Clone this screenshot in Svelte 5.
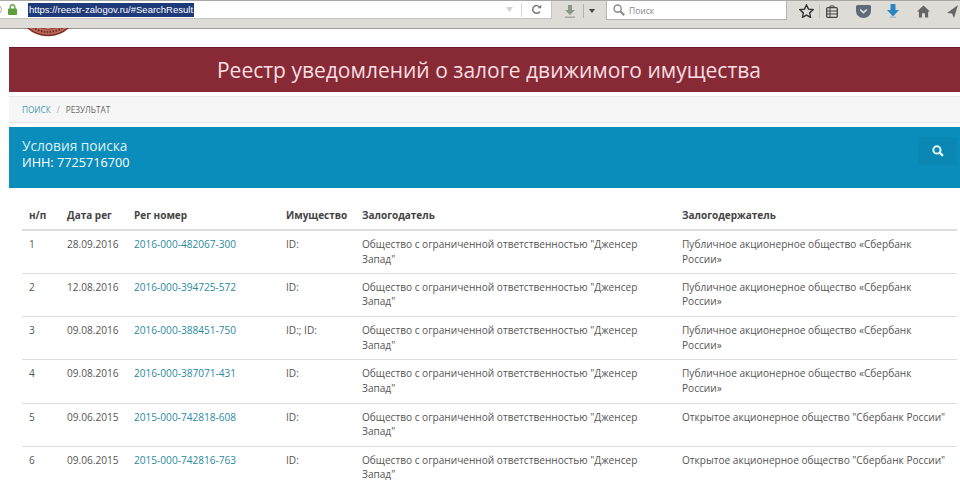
<script>
  const holder_a = "Публичное акционерное общество «Сбербанк России»";
  const holder_b = 'Открытое акционерное общество "Сбербанк России"';
  const pledger = 'Общество с ограниченной ответственностью "Дженсер Запад"';

  const rows = [
    { n: 1, date: "28.09.2016", num: "2016-000-482067-300", prop: "ID:", holder: holder_a },
    { n: 2, date: "12.08.2016", num: "2016-000-394725-572", prop: "ID:", holder: holder_a },
    { n: 3, date: "09.08.2016", num: "2016-000-388451-750", prop: "ID:; ID:", holder: holder_a },
    { n: 4, date: "09.08.2016", num: "2016-000-387071-431", prop: "ID:", holder: holder_a },
    { n: 5, date: "09.06.2015", num: "2015-000-742818-608", prop: "ID:", holder: holder_b },
    { n: 6, date: "09.06.2015", num: "2015-000-742816-763", prop: "ID:", holder: holder_b },
  ];
</script>

<div id="page">
  <div id="toolbar">
    <div id="urlbar">
      <span id="back"></span>
      <svg class="lock" width="9" height="11" viewBox="0 0 9 11">
        <path d="M2.2 5V3a2.3 2.3 0 0 1 4.6 0V5" fill="none" stroke="#6aa84a" stroke-width="1.4" />
        <rect x="0" y="4.5" width="9" height="6.5" rx="1" fill="#5f9e3c" />
      </svg>
      <span id="url">https://reestr-zalogov.ru/#SearchResult</span>
      <svg class="dropmark" width="7" height="5" viewBox="0 0 7 5"><path d="M0 0h7L3.5 5z" fill="#d4d4d0" /></svg>
      <span class="sep"></span>
      <svg class="reload" width="11" height="11" viewBox="0 0 12 12">
        <path d="M9.6 8.2A4.2 4.2 0 1 1 9.4 3.4" fill="none" stroke="#77797a" stroke-width="1.6" />
        <path d="M7.2 4.6h4V0.8z" fill="#77797a" />
      </svg>
    </div>
    <div id="tools">
      <svg width="10" height="13" viewBox="0 0 10 13">
        <path d="M3 0h4v5h3L5 10 0 5h3z" fill="#8b9a86" />
        <rect x="0" y="11.5" width="10" height="1.5" fill="#a4ad9f" />
      </svg>
      <span class="tool-sep"></span>
      <svg class="caret" width="6" height="4" viewBox="0 0 6 4"><path d="M0 0h6L3 4z" fill="#444" /></svg>
      <div id="searchbar">
        <svg width="12" height="12" viewBox="0 0 12 12">
          <circle cx="4.6" cy="4.6" r="3.6" fill="none" stroke="#8a8a8a" stroke-width="1.4" />
          <path d="M7.3 7.3L11.2 11.2" stroke="#8a8a8a" stroke-width="2" />
        </svg>
        <span>Поиск</span>
      </div>
      <svg class="star" width="15" height="14" viewBox="0 0 16 15">
        <path d="M8 1l2.1 4.5 4.9.6-3.6 3.4.9 4.8L8 11.9l-4.3 2.4.9-4.8L1 6.1l4.9-.6z" fill="none" stroke="#333" stroke-width="1.5" />
      </svg>
      <span class="tool-sep light"></span>
      <svg class="clip" width="12" height="13" viewBox="0 0 12 13">
        <rect x="0.7" y="2.7" width="10.6" height="9.6" rx="1" fill="none" stroke="#444" stroke-width="1.3" />
        <path d="M4 2.5V1h4v1.5M0.7 6h10.6M0.7 9h10.6M4 3v9" fill="none" stroke="#444" stroke-width="1" />
      </svg>
      <svg class="pocket" width="15" height="13" viewBox="0 0 15 13">
        <path d="M1.5 0h12A1.5 1.5 0 0 1 15 1.5V6a7.5 7 0 0 1-15 0V1.5A1.5 1.5 0 0 1 1.5 0z" fill="#5e6a78" />
        <path d="M4.2 4.5L7.5 7.6 10.8 4.5" fill="none" stroke="#e6e6e0" stroke-width="1.6" />
      </svg>
      <svg class="down" width="12" height="14" viewBox="0 0 12 14">
        <path d="M3.5 0h5v6H12L6 12.5 0 6h3.5z" fill="#2a86c2" />
        <rect x="3" y="12.6" width="6" height="1.2" fill="#9db9c9" />
      </svg>
      <svg class="home" width="13" height="13" viewBox="0 0 14 13">
        <path d="M7 0L14 6.6h-2V13H8.6V8.5H5.4V13H2V6.6H0z" fill="#666" />
      </svg>
      <svg class="send" width="11" height="13" viewBox="0 0 11 13">
        <path d="M11 0L0 8l5 .6L7 13z" fill="#666" />
      </svg>
    </div>
  </div>

  <div id="logo-strip">
    <svg width="50" height="10" viewBox="0 0 50 10">
      <circle cx="25" cy="-23" r="30.5" fill="#b9685a" stroke="#7d2a22" stroke-width="1.4" />
      <circle cx="25" cy="-23" r="27" fill="none" stroke="#6e2a24" stroke-width="2" stroke-dasharray="1.5 1.5" />
      <circle cx="25" cy="-23" r="24" fill="#f4ece8" stroke="#8f3028" stroke-width="1" />
    </svg>
  </div>

  <div id="content">
    <h1>Реестр уведомлений о залоге движимого имущества</h1>

    <div id="crumbs">
      <a href="#search">Поиск</a>
      <span class="slash">/</span>
      <span>Результат</span>
    </div>

    <div id="panel">
      <div id="terms">
        <div class="terms-title">Условия поиска</div>
        <div class="terms-inn">ИНН: 7725716700</div>
      </div>
      <button id="search-btn" aria-label="Поиск">
        <svg width="12" height="12" viewBox="0 0 11 11">
          <circle cx="4.5" cy="4.5" r="3.3" fill="none" stroke="#dff6fa" stroke-width="1.9" />
          <path d="M7 7L10 10" stroke="#dff6fa" stroke-width="2.2" />
        </svg>
      </button>
    </div>

    <table>
      <thead>
        <tr>
          <th class="c1">н/п</th>
          <th class="c2">Дата рег</th>
          <th class="c3">Рег номер</th>
          <th class="c4">Имущество</th>
          <th class="c5">Залогодатель</th>
          <th>Залогодержатель</th>
        </tr>
      </thead>
      <tbody>
        {#each rows as row}
          <tr>
            <td>{row.n}</td>
            <td>{row.date}</td>
            <td><a href="#result">{row.num}</a></td>
            <td>{row.prop}</td>
            <td>{pledger}</td>
            <td>{row.holder}</td>
          </tr>
        {/each}
      </tbody>
    </table>
  </div>
</div>

<style>
  :global(body) {
    margin: 0;
    background: #fff;
  }

  #page {
    width: 960px;
    height: 500px;
    overflow: hidden;
    font-family: "Open Sans", "Noto Sans", sans-serif;
    color: #444;
  }

  #toolbar {
    height: 27px;
    display: flex;
    align-items: flex-start;
    background: #dddcd6;
    border-top: 1px solid #a8a8a4;
    border-bottom: 1px solid #9a9a96;
    margin-bottom: -1px;
  }

  #urlbar {
    position: relative;
    width: 552px;
    height: 18px;
    flex: none;
    display: flex;
    align-items: center;
    background: #fff;
    border-right: 1px solid #c4c4c0;
    border-bottom: 1px solid #c4c4c0;
    box-sizing: border-box;
    padding-left: 8px;
  }

  #back {
    position: absolute;
    left: -7px;
    top: 4px;
    width: 7px;
    height: 7px;
    border: 1px solid #aaa;
    border-radius: 50%;
  }

  .lock {
    flex: none;
  }

  #url {
    margin-left: 11px;
    background: #1f3a78;
    color: #fff;
    font-family: "Liberation Sans", sans-serif;
    font-size: 9.5px;
    line-height: 14px;
    padding: 0 1px;
    white-space: nowrap;
  }

  .dropmark {
    margin-left: 312px;
    flex: none;
  }

  .sep {
    width: 1px;
    height: 14px;
    background: #d8d8d4;
    margin-left: 8px;
    flex: none;
  }

  .reload {
    margin-left: 9px;
    flex: none;
  }

  #tools {
    flex: 1;
    display: flex;
    align-items: center;
    height: 20px;
    padding-left: 13px;
  }

  .tool-sep {
    width: 1px;
    height: 14px;
    background: #b2b2ae;
    margin-left: 8px;
  }

  .tool-sep.light {
    margin-left: 5px;
    background: #c2c2be;
  }

  .caret {
    margin-left: 5px;
  }

  #searchbar {
    width: 181px;
    height: 19px;
    margin-left: 11px;
    margin-top: -1px;
    display: flex;
    align-items: center;
    gap: 4px;
    background: #fff;
    border: 1px solid #b4b4b0;
    border-top: none;
    box-sizing: border-box;
    padding-left: 6px;
    font-size: 8.5px;
    color: #888;
  }

  .star {
    margin-left: 12px;
  }

  .clip {
    margin-left: 6px;
  }

  .pocket {
    margin-left: 18px;
  }

  .down {
    margin-left: 16px;
  }

  .home {
    margin-left: 18px;
  }

  .send {
    margin-left: 17px;
  }

  #logo-strip {
    height: 19px;
    padding-left: 23px;
  }

  #logo-strip svg {
    display: block;
  }

  #content {
    padding-left: 9px;
  }

  h1 {
    margin: 0;
    height: 45px;
    padding-left: 9px;
    background: #872a35;
    border-top: 1px solid #6f1c2a;
    box-sizing: border-box;
    color: #f8dfe2;
    font-size: 21px;
    font-weight: 400;
    line-height: 44px;
    text-align: center;
  }

  #crumbs {
    height: 27px;
    margin-top: 4px;
    display: flex;
    align-items: center;
    gap: 6px;
    padding-left: 13px;
    background: #f6f6f6;
    border-top: 1px solid #e8e8e8;
    border-bottom: 1px solid #e6e6e6;
    box-sizing: border-box;
    font-size: 8.2px;
    text-transform: uppercase;
    color: #666;
  }

  #crumbs a {
    color: #4b9ab5;
    text-decoration: none;
  }

  .slash {
    color: #aaa;
  }

  #panel {
    height: 61px;
    margin-top: 4px;
    display: flex;
    justify-content: space-between;
    background: #0a8dba;
    color: #fff;
    padding: 10px 3px 0 13px;
    box-sizing: border-box;
  }

  .terms-title {
    font-size: 13.7px;
    line-height: 17px;
    color: #dff1f6;
  }

  .terms-inn {
    font-size: 12.7px;
    line-height: 17px;
  }

  #search-btn {
    width: 39px;
    height: 28px;
    padding: 0;
    border: none;
    background: #0a87b2;
    display: flex;
    align-items: center;
    justify-content: center;
  }

  table {
    width: 935px;
    margin: 12px 0 0 13px;
    border-collapse: collapse;
    table-layout: fixed;
    font-size: 10.1px;
  }

  th {
    height: 29px;
    padding: 0 7px;
    border-bottom: 2px solid #ddd;
    text-align: left;
    font-weight: 700;
    font-size: 10px;
    color: #444;
  }

  td {
    height: 43.3px;
    padding: 6px 7px 0;
    border-bottom: 1px solid #ddd;
    box-sizing: border-box;
    line-height: 14.5px;
    color: #555;
    vertical-align: top;
  }

  tbody tr:last-child td {
    border-bottom: none;
  }

  td a {
    color: #2b8a9e;
    text-decoration: none;
  }

  .c1 {
    width: 24px;
  }

  .c2 {
    width: 53px;
  }

  .c3 {
    width: 138px;
  }

  .c4 {
    width: 62px;
  }

  .c5 {
    width: 306px;
  }
</style>
